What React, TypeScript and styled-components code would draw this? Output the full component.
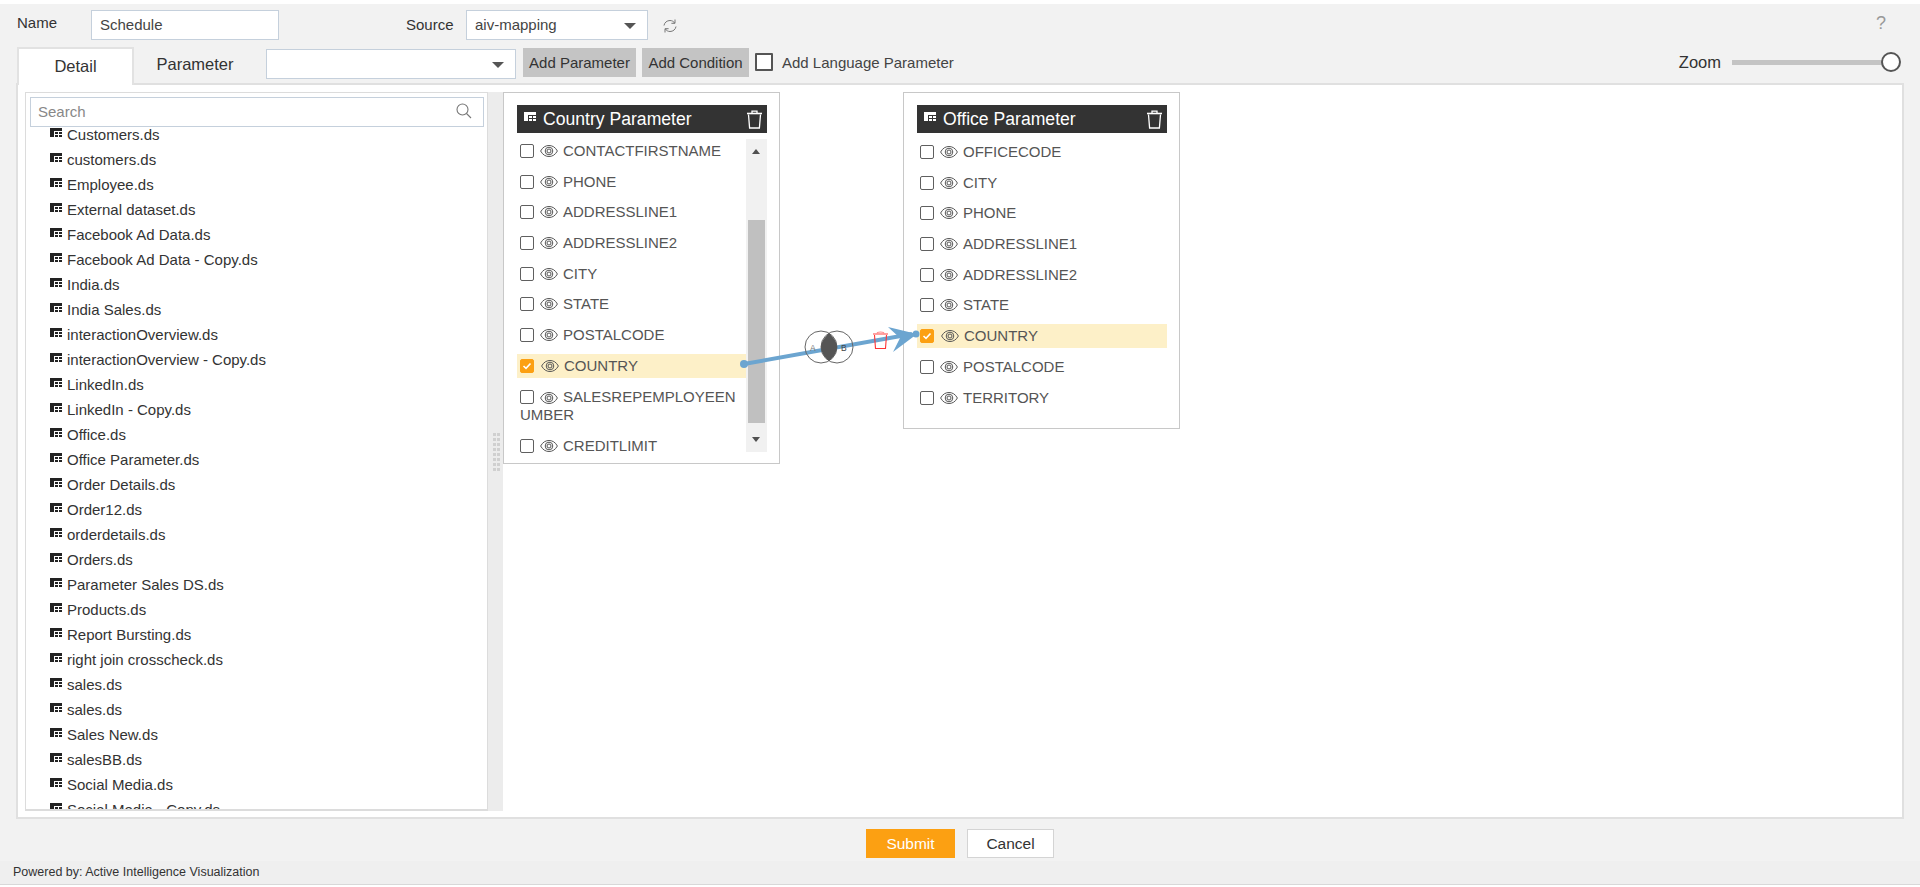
import React from "react";
import styled, { createGlobalStyle } from "styled-components";

const Global = createGlobalStyle`
  html, body { margin: 0; padding: 0; background: #fff; }
  * { box-sizing: border-box; }
  body { font-family: "Liberation Sans", Arial, sans-serif; color: #333; overflow: hidden; }
`;

const Page = styled.div`
  width: 1920px;
  height: 887px;
  padding-top: 4px;
  display: flex;
  flex-direction: column;
  background: #fff;
`;
const Shell = styled.div`
  background: #f2f2f2;
  height: 881px;
  flex: none;
  display: flex;
  flex-direction: column;
`;
const TopRow = styled.div`
  height: 43px;
  flex: none;
  display: flex;
  align-items: flex-start;
  padding: 6px 0 0 17px;
  position: relative;
`;
const NameLabel = styled.label`
  width: 74px;
  font-size: 15px;
  line-height: 16px;
  margin-top: 5px;
  color: #333;
`;
const TextBox = styled.div<{ $w: number }>`
  width: ${(p) => p.$w}px;
  height: 30px;
  background: #fff;
  border: 1px solid #c5d0dc;
  font-size: 15px;
  line-height: 28px;
  padding-left: 8px;
  color: #444;
  position: relative;
`;
const SourceLabel = styled.label`
  margin-left: 127px;
  width: 60px;
  font-size: 15px;
  line-height: 30px;
  color: #333;
`;
const Caret = styled.span`
  position: absolute;
  right: 11px;
  top: 12px;
  width: 0;
  height: 0;
  border-left: 6px solid transparent;
  border-right: 6px solid transparent;
  border-top: 6px solid #555;
`;
const Refresh = styled.span`
  margin: 8px 0 0 14px;
  display: flex;
`;
const Help = styled.span`
  margin-left: auto;
  margin-right: 34px;
  margin-top: 3px;
  font-size: 18px;
  line-height: 20px;
  color: #999;
`;
const TabRow = styled.div`
  height: 37px;
  flex: none;
  display: flex;
  padding-left: 17px;
  align-items: flex-start;
  position: relative;
  z-index: 1;
`;
const ActiveTab = styled.div`
  width: 117px;
  height: 38px;
  background: #fff;
  border: 2px solid #e2e2e2;
  border-bottom: none;
  text-align: center;
  font-size: 16.5px;
  line-height: 35px;
  color: #333;
`;
const Tab = styled.div`
  width: 132px;
  height: 37px;
  padding-right: 10px;
  text-align: center;
  font-size: 16.5px;
  line-height: 34px;
  color: #333;
`;
const ParamSelect = styled(TextBox)`
  margin: 2px 1px 0 0;
`;
const GreyButton = styled.button<{ $w: number }>`
  width: ${(p) => p.$w}px;
  height: 29px;
  margin: 1px 0 0 6px;
  border: none;
  padding: 0;
  background: #c4c4c4;
  font: 15px/27px "Liberation Sans", Arial, sans-serif;
  color: #333;
`;
const CheckRow = styled.label`
  display: flex;
  align-items: center;
  margin-left: 6px;
  margin-top: 6px;
  height: 18px;
  font-size: 15px;
  color: #444;
`;
const BigCheck = styled.span`
  width: 18px;
  height: 18px;
  border: 2px solid #555;
  background: #fff;
  border-radius: 1px;
  margin-right: 9px;
`;
const ZoomGroup = styled.div`
  margin-left: auto;
  margin-right: 29px;
  margin-top: 5px;
  display: flex;
  align-items: center;
  height: 20px;
`;
const ZoomLabel = styled.span`
  font-size: 16.5px;
  color: #333;
  margin-right: 11px;
`;
const ZoomTrack = styled.div`
  width: 159px;
  height: 5px;
  background: #c4c4c4;
  position: relative;
`;
const ZoomThumb = styled.span`
  position: absolute;
  right: -10px;
  top: -8px;
  width: 20px;
  height: 20px;
  border-radius: 50%;
  border: 2px solid #555;
  background: #fff;
`;
const Panel = styled.div`
  margin: -1px 16px 0 16px;
  height: 736px;
  flex: none;
  border: 2px solid #e0e0e0;
  background: #fff;
  display: flex;
  padding-top: 7px;
`;
const LeftPane = styled.div`
  margin-left: 7px;
  width: 463px;
  height: 719px;
  border: 1px solid #dcdcdc;
  border-bottom-width: 2px;
  display: flex;
  flex-direction: column;
  padding: 4px 3px 0 4px;
  background: #fff;
`;
const SearchBox = styled.div`
  height: 30px;
  flex: none;
  border: 1px solid #c5d0dc;
  font-size: 15px;
  line-height: 28px;
  padding-left: 7px;
  color: #888;
  position: relative;
`;
const SearchIcon = styled.span`
  position: absolute;
  right: 10px;
  top: 4px;
  display: flex;
`;
const List = styled.ul`
  list-style: none;
  margin: 0;
  padding: 0 0 0 20px;
  overflow: hidden;
  flex: 1;
`;
const ListItem = styled.li`
  height: 25px;
  display: flex;
  align-items: center;
  font-size: 15px;
  color: #333;
  &:first-child {
    margin-top: -5px;
  }
`;
const ListIcon = styled.span`
  display: flex;
  margin-right: 5px;
  margin-top: -5px;
`;
const Splitter = styled.div`
  width: 15px;
  height: 719px;
  background: #ececec;
  display: grid;
  grid-template-columns: 3px 3px;
  gap: 2px 1px;
  align-content: center;
  padding-left: 5px;
`;
const Dot = styled.i`
  width: 3px;
  height: 3px;
  background: #d0d0d0;
  display: block;
`;
const Canvas = styled.div`
  position: relative;
  flex: 1;
`;
const Card = styled.div<{ $x: number; $h: number }>`
  position: absolute;
  left: ${(p) => p.$x}px;
  top: 0;
  width: 277px;
  height: ${(p) => p.$h}px;
  background: #fff;
  border: 1px solid #c8c8c8;
  padding: 12px 12px 0 13px;
`;
const CardHead = styled.div`
  height: 28px;
  background: #333;
  color: #fff;
  display: flex;
  align-items: center;
  font-size: 17.6px;
  padding: 0 4px 0 7px;
`;
const HeadIcon = styled.span`
  display: flex;
  margin-top: -5px;
`;
const CardTitle = styled.span`
  margin-left: 7px;
  flex: 1;
`;
const CardBody = styled.div<{ $top: number }>`
  position: relative;
  height: 313px;
  margin-top: ${(p) => p.$top}px;
`;
const Row = styled.div<{ $on?: boolean; $tall?: boolean; $right?: number }>`
  display: ${(p) => (p.$tall ? "block" : "flex")};
  align-items: center;
  height: ${(p) => (p.$tall ? 49 : 24)}px;
  margin: 0 ${(p) => p.$right ?? 0}px ${(p) => (p.$tall ? 0 : 6.7)}px 0;
  padding: ${(p) => (p.$tall ? 3 : 0)}px 0 0 3px;
  font-size: 15px;
  line-height: 18px;
  color: #555;
  background: ${(p) => (p.$on ? "#fdf0c8" : "transparent")};
  word-break: break-all;
`;
const Check = styled.span<{ $on?: boolean }>`
  display: inline-flex;
  align-items: center;
  justify-content: center;
  vertical-align: -2px;
  flex: none;
  width: 14px;
  height: 14px;
  border-radius: 2px;
  border: 1px solid ${(p) => (p.$on ? "#fca012" : "#5f5f5f")};
  background: ${(p) => (p.$on ? "#fca012" : "#fff")};
  margin-right: ${(p) => (p.$on ? 7 : 6)}px;
`;
const EyeWrap = styled.span`
  display: inline-flex;
  vertical-align: -3px;
  flex: none;
  margin-right: 5px;
`;
const Scrollbar = styled.div`
  position: absolute;
  right: 0;
  top: 0;
  bottom: 0;
  width: 21px;
  background: #f1f1f1;
`;
const ScrollThumb = styled.div`
  position: absolute;
  left: 2px;
  right: 2px;
  top: 81px;
  height: 203px;
  background: #c0c0c0;
`;
const ArrowUp = styled.span`
  position: absolute;
  left: 6px;
  top: 10px;
  border-left: 4.5px solid transparent;
  border-right: 4.5px solid transparent;
  border-bottom: 5px solid #505050;
`;
const ArrowDown = styled.span`
  position: absolute;
  left: 6px;
  bottom: 10px;
  border-left: 4.5px solid transparent;
  border-right: 4.5px solid transparent;
  border-top: 5px solid #505050;
`;
const Overlay = styled.svg`
  position: absolute;
  left: 0;
  top: 0;
  pointer-events: none;
`;
const Actions = styled.div`
  height: 42px;
  flex: none;
  display: flex;
  justify-content: center;
  align-items: flex-start;
  padding: 10px 0 0 0;
  gap: 12px;
`;
const Submit = styled.button`
  width: 89px;
  height: 29px;
  border: none;
  padding-top: 2px;
  background: #fca012;
  color: #fff;
  font: 15.5px "Liberation Sans", Arial, sans-serif;
`;
const Cancel = styled.button`
  width: 87px;
  height: 29px;
  border: 1px solid #d4d4d4;
  padding-top: 2px;
  background: #fff;
  color: #333;
  font: 15.5px "Liberation Sans", Arial, sans-serif;
`;
const Credit = styled.footer`
  height: 24px;
  flex: none;
  background: #efefef;
  border-bottom: 1px solid #d8d8d8;
  font-size: 12.5px;
  line-height: 23px;
  padding-left: 13px;
  color: #333;
`;

const TableIcon = ({ light }: { light?: boolean }) => (
  <svg width="12" height="9" viewBox="0 0 12 9" style={{ flex: "none" }}>
    <rect width="12" height="9" fill={light ? "#fff" : "#222"} />
    <g fill={light ? "#333" : "#fff"}>
      <rect x="4" y="3" width="1" height="6" />
      <rect x="4" y="3" width="8" height="1" />
      <rect x="8" y="3" width="1" height="6" />
      <rect x="4" y="6" width="8" height="1" />
    </g>
  </svg>
);
const TrashIcon = () => (
  <svg width="17" height="19" viewBox="0 0 17 19" fill="none" stroke="#fff" strokeWidth="1.3">
    <path d="M1 3.5h15" strokeWidth="1.6" />
    <path d="M6 3V1.2h5V3" />
    <path d="M2.5 4.5 3.6 18h9.8l1.1-13.5" />
  </svg>
);
const Eye = () => (
  <svg width="18" height="14" viewBox="0 0 18 14" fill="none" stroke="#555" strokeWidth="1">
    <path d="M.6 7C2.7 3.2 5.6 1.5 9 1.5s6.3 1.7 8.4 5.5c-2.1 3.8-5 5.5-8.4 5.5S2.7 10.8.6 7Z" />
    <circle cx="9" cy="7" r="3.8" />
    <circle cx="9" cy="7" r="2" />
  </svg>
);
const Tick = () => (
  <svg width="10" height="8" viewBox="0 0 10 8" fill="none" stroke="#fff" strokeWidth="1.6">
    <path d="M1.5 4 4 6.3 8.5 1.5" />
  </svg>
);

const files = [
  "Customers.ds", "customers.ds", "Employee.ds", "External dataset.ds", "Facebook Ad Data.ds",
  "Facebook Ad Data - Copy.ds", "India.ds", "India Sales.ds", "interactionOverview.ds",
  "interactionOverview - Copy.ds", "LinkedIn.ds", "LinkedIn - Copy.ds", "Office.ds",
  "Office Parameter.ds", "Order Details.ds", "Order12.ds", "orderdetails.ds", "Orders.ds",
  "Parameter Sales DS.ds", "Products.ds", "Report Bursting.ds", "right join crosscheck.ds",
  "sales.ds", "sales.ds", "Sales New.ds", "salesBB.ds", "Social Media.ds", "Social Media - Copy.ds",
];
const leftCols = ["CONTACTFIRSTNAME", "PHONE", "ADDRESSLINE1", "ADDRESSLINE2", "CITY", "STATE", "POSTALCODE", "COUNTRY", "SALESREPEMPLOYEENUMBER", "CREDITLIMIT"];
const rightCols = ["OFFICECODE", "CITY", "PHONE", "ADDRESSLINE1", "ADDRESSLINE2", "STATE", "COUNTRY", "POSTALCODE", "TERRITORY"];

const Column = ({ name, right }: { name: string; right?: number }) => {
  const on = name === "COUNTRY";
  const tall = name.length > 20;
  return (
    <Row $on={on} $tall={tall} $right={right}>
      <Check $on={on}>{on && <Tick />}</Check>
      <EyeWrap><Eye /></EyeWrap>
      {tall ? name : <span>{name}</span>}
    </Row>
  );
};

export default function App() {
  return (
    <Page>
      <Global />
      <Shell>
        <TopRow>
          <NameLabel>Name</NameLabel>
          <TextBox $w={188}>Schedule</TextBox>
          <SourceLabel>Source</SourceLabel>
          <TextBox $w={182}>aiv-mapping<Caret /></TextBox>
          <Refresh>
            <svg width="16" height="16" viewBox="0 0 16 16" fill="none" stroke="#777" strokeWidth="1">
              <path d="M2 7.5C2.4 4.5 5 2.5 8 2.5c2 0 3.7 1 4.6 2.5" />
              <path d="M13 1.5v3.8H9.4" />
              <path d="M14 8.5c-.4 3-3 5-6 5-2 0-3.7-1-4.6-2.5" />
              <path d="M3 14.5v-3.8h3.6" />
            </svg>
          </Refresh>
          <Help>?</Help>
        </TopRow>
        <TabRow>
          <ActiveTab>Detail</ActiveTab>
          <Tab>Parameter</Tab>
          <ParamSelect $w={250}><Caret /></ParamSelect>
          <GreyButton $w={113}>Add Parameter</GreyButton>
          <GreyButton $w={107}>Add Condition</GreyButton>
          <CheckRow><BigCheck />Add Language Parameter</CheckRow>
          <ZoomGroup>
            <ZoomLabel>Zoom</ZoomLabel>
            <ZoomTrack><ZoomThumb /></ZoomTrack>
          </ZoomGroup>
        </TabRow>
        <Panel>
          <LeftPane>
            <SearchBox>
              Search
              <SearchIcon>
                <svg width="18" height="18" viewBox="0 0 18 18" fill="none" stroke="#777" strokeWidth="1.1">
                  <circle cx="7.5" cy="7.5" r="5.5" />
                  <path d="m11.5 11.5 4.5 4.5" />
                </svg>
              </SearchIcon>
            </SearchBox>
            <List>
              {files.map((f, i) => (
                <ListItem key={i}>
                  <ListIcon><TableIcon /></ListIcon>
                  {f}
                </ListItem>
              ))}
            </List>
          </LeftPane>
          <Splitter>
            {Array.from({ length: 16 }).map((_, i) => <Dot key={i} />)}
          </Splitter>
          <Canvas>
            <Card $x={0} $h={372}>
              <CardHead>
                <HeadIcon><TableIcon light /></HeadIcon>
                <CardTitle>Country Parameter</CardTitle>
                <TrashIcon />
              </CardHead>
              <CardBody $top={6}>
                {leftCols.map((c) => <Column key={c} name={c} right={21} />)}
                <Scrollbar>
                  <ArrowUp />
                  <ScrollThumb />
                  <ArrowDown />
                </Scrollbar>
              </CardBody>
            </Card>
            <Card $x={400} $h={337}>
              <CardHead>
                <HeadIcon><TableIcon light /></HeadIcon>
                <CardTitle>Office Parameter</CardTitle>
                <TrashIcon />
              </CardHead>
              <CardBody $top={7}>
                {rightCols.map((c) => <Column key={c} name={c} />)}
              </CardBody>
            </Card>
            <Overlay width="520" height="300" viewBox="503 92 520 300">
              <path d="M744 364 L912 334" stroke="#6ca5d0" strokeWidth="4" fill="none" />
              <circle cx="744" cy="364" r="4" fill="#6ca5d0" />
              <circle cx="916" cy="334" r="3.5" fill="#6ca5d0" />
              <path d="M888 327 L917 334 L893 352 L900 338 Z" fill="#6ca5d0" />
              <circle cx="821" cy="347" r="16" fill="none" stroke="#666" strokeWidth="1" />
              <circle cx="837" cy="347" r="16" fill="none" stroke="#666" strokeWidth="1" />
              <path d="M829 333 C 835 339 837 343 837 347 C 837 351 835 356 829 361 C 823 356 821 351 821 347 C 821 343 823 339 829 333 Z" fill="#555" />
              <text x="810" y="351" fontSize="8.5" fill="#777" fontFamily="Liberation Sans">A</text>
              <text x="841" y="351" fontSize="8.5" fill="#444" fontFamily="Liberation Sans">B</text>
              <g fill="none" stroke="#f33" strokeWidth="1.1">
                <path d="M873 334h15" stroke="#f88" strokeWidth="1.6" />
                <path d="M877 333.5c0-2 7-2 7 0" stroke="#f88" />
                <path d="M874.5 335 875.5 348.5h10l1-13.5" />
              </g>
            </Overlay>
          </Canvas>
        </Panel>
        <Actions>
          <Submit>Submit</Submit>
          <Cancel>Cancel</Cancel>
        </Actions>
        <Credit>Powered by: Active Intelligence Visualization</Credit>
      </Shell>
    </Page>
  );
}
